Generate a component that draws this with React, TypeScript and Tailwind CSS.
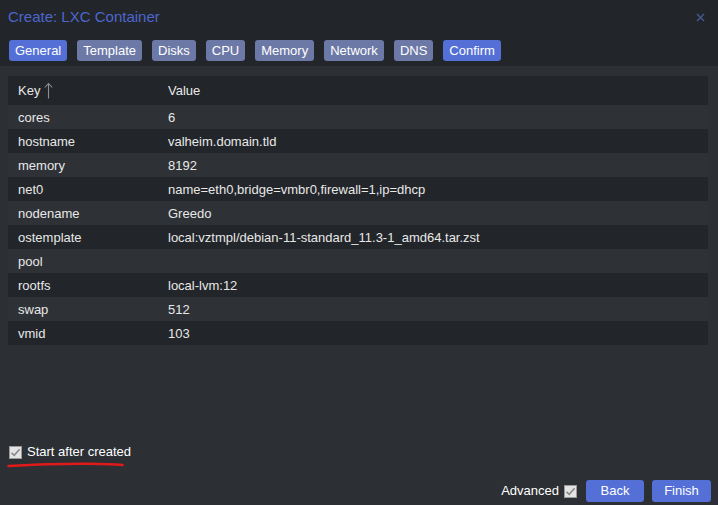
import { Fragment } from 'react'

const tabs = ['General', 'Template', 'Disks', 'CPU', 'Memory', 'Network', 'DNS', 'Confirm']

const rows: [string, string][] = [
  ['cores', '6'],
  ['hostname', 'valheim.domain.tld'],
  ['memory', '8192'],
  ['net0', 'name=eth0,bridge=vmbr0,firewall=1,ip=dhcp'],
  ['nodename', 'Greedo'],
  ['ostemplate', 'local:vztmpl/debian-11-standard_11.3-1_amd64.tar.zst'],
  ['pool', ''],
  ['rootfs', 'local-lvm:12'],
  ['swap', '512'],
  ['vmid', '103'],
]

function CheckBox() {
  return (
    <svg width="13" height="13" viewBox="0 0 13 13" className="shrink-0">
      <rect x="0.5" y="0.5" width="12" height="12" fill="#e4e4e4" stroke="#9a9a9a" />
      <path d="M2.5 6.8 L5.2 9.4 L10.6 3.2" fill="none" stroke="#8a8a8a" strokeWidth="1.6" />
    </svg>
  )
}

export default function App() {
  return (
    <div className="w-[718px] h-[505px] bg-[#2c2f34] flex flex-col font-['Liberation_Sans',Arial,sans-serif] text-[13px] text-[#e8e8e8] overflow-hidden">
      {/* header + tabs */}
      <div className="bg-[#222529] h-[66px] shrink-0">
        <div className="flex items-center justify-between h-[34px] pl-[8px] pr-[13px]">
          <span className="text-[15px] text-[#4d66cf]">Create: LXC Container</span>
          <svg width="9" height="9" viewBox="0 0 9 9">
            <path d="M1 1 L8 8 M8 1 L1 8" stroke="#46578f" strokeWidth="1.5" />
          </svg>
        </div>
        <div className="flex gap-[10px] pl-[9px] pt-[6px]">
          {tabs.map((t, i) => (
            <div key={t}
              className={`h-[21px] leading-[21px] px-[6px] rounded-[3px] text-white ${i === 0 || i === 7 ? 'bg-[#5470d6]' : 'bg-[#6c78a6]'}`}>
              {t}
            </div>
          ))}
        </div>
      </div>

      {/* table */}
      <div className="px-[8px] pt-[10px] pr-[10px]">
        <div className="grid grid-cols-[160px_1fr]">
          <div className="bg-[#222529] h-[29px] flex items-center pl-[10px]">
            Key
            <svg width="9" height="17" viewBox="0 0 9 17" className="ml-[4px]">
              <path d="M4.5 1.5 V16.5 M0.8 5.5 L4.5 1.5 L8.2 5.5" fill="none" stroke="#8d8f94" strokeWidth="1.1" />
            </svg>
          </div>
          <div className="bg-[#222529] h-[29px] flex items-center">Value</div>
          {rows.map(([k, v], i) => (
            <Fragment key={k}>
              <div className={`h-[24px] flex items-center pl-[10px] pt-[1px] ${i % 2 ? 'bg-[#222529]' : 'bg-[#2e3136]'}`}>{k}</div>
              <div className={`h-[24px] flex items-center pt-[1px] ${i % 2 ? 'bg-[#222529]' : 'bg-[#2e3136]'}`}>{v}</div>
            </Fragment>
          ))}
        </div>
      </div>

      <div className="flex-1" />

      {/* start after created */}
      <div className="pl-[9px]">
        <div className="flex items-center h-[16px] gap-[5px] text-white">
          <CheckBox />
          <span>Start after created</span>
        </div>
        <svg width="120" height="8" viewBox="0 0 120 8" className="block -ml-[2px] mt-[1px]">
          <path d="M1.5 5 Q 50 2.5 80 2.8 Q 105 3 115.5 4" fill="none" stroke="#e0191b" strokeWidth="2.6" strokeLinecap="round" />
        </svg>
      </div>

      {/* footer */}
      <div className="flex items-center justify-end gap-[8px] pr-[7px] pb-[3px] mt-[11px]">
        <div className="flex items-center gap-[5px] mr-[1px]">
          <span className="text-white">Advanced</span>
          <CheckBox />
        </div>
        <div className="w-[58px] h-[22px] rounded-[3px] bg-[#5470d6] text-white flex items-center justify-center">Back</div>
        <div className="w-[59px] h-[22px] rounded-[3px] bg-[#5470d6] text-white flex items-center justify-center">Finish</div>
      </div>
    </div>
  )
}
